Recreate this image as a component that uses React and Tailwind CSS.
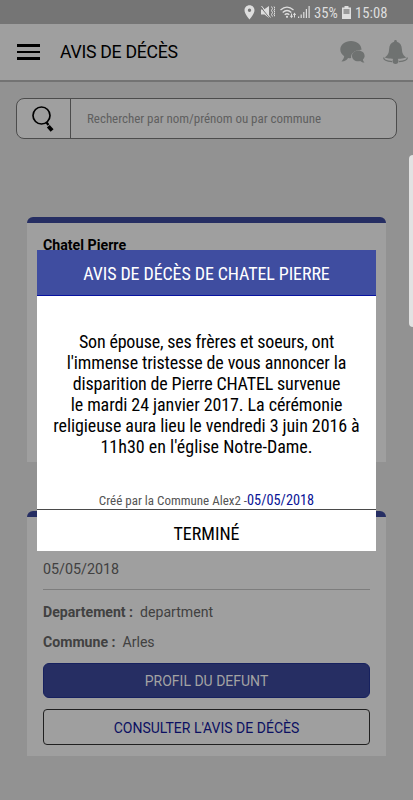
function StatusBar() {
  return (
    <div className="flex h-6 items-center bg-[#757575] pl-[244px] text-[#dedede]">
      <svg viewBox="0 0 11 15" className="h-[15px] w-[11px] shrink-0" fill="currentColor" fillRule="evenodd">
        <path d="M5.500 .3C2.600.3.500 2.500.500 5.200c0 3.500 5 9.300 5 9.300s5-5.800 5-9.300C10.500 2.500 8.400.3 5.500.3zM5.500 3.500a1.700 1.700 0 1 1 0 3.400 1.700 1.700 0 0 1 0-3.400z" />
      </svg>
      {/* Vibrate / muted */}
      <svg viewBox="0 0 14 14" className="ml-[6px] h-[14px] w-[14px] shrink-0" fill="currentColor">
        <path d="M0 4.500h3l5-3.500v12L3.500 9.500H0z" />
        <path d="M0 2.500l9 11" stroke="#757575" strokeWidth="1" />
        <path d="M.5 1l9 11.500M10.500 1.500l1 2-1 2 1 2-1 2 1 2M13 1.500l1 2-1 2 1 2-1 2 1 2" fill="none" stroke="currentColor" strokeWidth="1" />
      </svg>
      {/* Wifi with traffic arrows */}
      <svg viewBox="0 0 17 14" className="ml-[5px] h-[14px] w-[17px] shrink-0" fill="none" stroke="currentColor" strokeWidth="1.3">
        <path d="M.5 5Q7 -.8 13.500 5M2.700 7.400Q7 3.600 11.300 7.400M4.700 9.700Q7 7.700 9.300 9.700" />
        <circle cx="7" cy="11.800" r="1.100" fill="currentColor" stroke="none" />
        <path d="M11.500 8.500v3M14.500 12.500V9.500" strokeWidth="1" />
        <path d="M9.800 10.800h3.400l-1.700 2.400zM12.900 10h3.200l-1.600-2.400z" fill="currentColor" stroke="none" />
      </svg>
      <svg viewBox="0 0 12 12" className="ml-[1px] h-[12px] w-[12px] shrink-0" fill="currentColor">
        <path d="M0 10.500h1.200V12H0zM2.600 8.500h1.200V12H2.600zM5.200 6h1.200v6H5.200zM7.800 3h1.200v9H7.800zM10.500 0h1.200v12h-1.200z" />
      </svg>
      <span className="ml-[4px] w-[26px] whitespace-nowrap pt-[2px] text-[14.7px]">35%</span>
      <svg viewBox="0 0 9 13" className="ml-[2px] h-[13px] w-[9px] shrink-0">
        <path d="M0 1.500h2.500V0h4v1.500H9V13H0z" fill="#dedede" />
        <path d="M1.500 3h6v5h-6z" fill="#999" />
      </svg>
      <span className="ml-[4px] whitespace-nowrap pt-[2px] text-[14.7px]">15:08</span>
    </div>
  );
}

function Header() {
  return (
    <header className="flex h-[58px] items-center border-b-2 border-[#737373] bg-[#9f9f9f] pl-[17px] pr-[5px] text-black">
      <div className="flex w-[23px] flex-col gap-[4px]">
        <span className="h-[2.5px] bg-black" />
        <span className="h-[2.5px] bg-black" />
        <span className="h-[2.5px] bg-black" />
      </div>
      <h1 className="ml-5 whitespace-nowrap pt-px text-[17.7px] font-[450] tracking-[-0.3px] font-stretch-normal">
        AVIS DE DÉCÈS
      </h1>
      {/* Messages */}
      <svg viewBox="0 0 25 22" className="ml-auto h-[22px] w-[25px]" fill="#6f7271">
        <path d="M11 0C4.900 0 .3 3.800.3 8.500c0 2.700 1.500 5.100 3.900 6.700-.2 1.700-1 3.200-2.700 5.300 3 .1 5.200-1.600 6.600-3.600 1 .2 2 .3 3 .2-.4-4.900 3-8.100 10.400-8.400C21.500 3.800 17 0 11 0z" />
        <path d="M18.300 9.600c-3.600 0-6.300 2.400-6.300 5.400s2.700 5.300 6.300 5.300c.7 0 1.300-.1 1.900-.3 1.100 1 2.500 1.700 4.300 1.500-1-.8-1.500-1.900-1.600-3 1.100-1 1.700-2.200 1.700-3.500 0-3-2.700-5.400-6.300-5.400z" />
      </svg>
      {/* Notifications */}
      <svg viewBox="0 0 25 24" className="ml-[18px] h-[24px] w-[25px]" fill="#6f7271">
        <path d="M12.500 0c-1 0-1.400.7-1.400 1.700-3.200.8-4.800 3.600-5 7.500-.2 4.500-1.700 6.300-4.300 8.300 3 1.900 18.400 1.900 21.400 0-2.600-2-4.100-3.800-4.300-8.300-.2-3.900-1.800-6.700-5-7.500 0-1-.4-1.700-1.400-1.700z" />
        <path d="M.8 17.500c-.4 2.200 2.500 3.700 8.400 4.200M24.200 17.500c.4 2.200-2.500 3.700-8.400 4.200" fill="none" stroke="#6f7271" strokeWidth="1.300" />
        <circle cx="12.500" cy="21" r="2.900" />
      </svg>
    </header>
  );
}

function SearchBar() {
  return (
    <div className="mx-4 mt-4 flex h-[41px] rounded-lg border border-[#4c4c4c] bg-[#9f9f9f]">
      <div className="flex w-[54px] items-center justify-center border-r border-[#4c4c4c] pr-[2px]">
        <svg viewBox="0 0 24 26" className="h-[26px] w-[24px]" fill="none" stroke="#000">
          <circle cx="10.500" cy="9.500" r="8.500" strokeWidth="1.700" />
          <path d="M15.500 16.500l2 2.500" strokeWidth="2.200" />
          <path d="M17.300 20.200l3.800 4.400" strokeWidth="3.800" />
        </svg>
      </div>
      <span className="self-center pl-4 pt-px text-[13px] tracking-[-0.04px] text-[#5f5f5f]">
        Rechercher par nom/prénom ou par commune
      </span>
    </div>
  );
}

function NoticeCard({ name, date, departement, commune }) {
  return (
    <article className="h-[245px] rounded-t-md border-t-[6px] border-[#262e63] bg-[#9f9f9f] px-4 text-[14px] text-[#414141] font-stretch-normal">
      {name && <h2 className="mt-[12px] text-[14.2px] font-bold leading-5 text-black">{name}</h2>}
      {date && (
        <>
          <p className="pt-[42px] text-[14.3px] leading-5">{date}</p>
          <div className="mt-[10px] h-px bg-[#7d7d7d]" />
          <p className="mt-3 text-[14.1px] leading-5"><b>Departement :</b>&nbsp; {departement}</p>
          <p className="mt-[10px] text-[14.1px] leading-5"><b>Commune :</b>&nbsp; {commune}</p>
          <button className="mt-[11px] block h-[35px] w-full rounded-md border border-[#17215f] bg-[#262e63] pt-px text-[14px] text-[#a3a3a3]">
            PROFIL DU DEFUNT
          </button>
          <button className="mt-[11px] block h-[36px] w-full rounded-[4px] border border-[#202020] pt-[2px] text-[14px] text-[#0b1062]">
            CONSULTER L'AVIS DE DÉCÈS
          </button>
        </>
      )}
    </article>
  );
}

function NoticeModal() {
  return (
    <div className="absolute left-[37px] top-[250px] flex h-[301px] w-[339px] flex-col bg-white text-center text-black">
      <h2 className="flex h-[46px] items-center justify-center border-b border-[#0712a0] bg-[#3f4da0] pt-[2px] text-[18px] tracking-[-0.1px] text-white">
        AVIS DE DÉCÈS DE CHATEL PIERRE
      </h2>
      <div className="whitespace-nowrap pt-[35px] text-[18px] leading-[21px]">
        <p className="tracking-[-0.18px]">Son épouse, ses frères et soeurs, ont</p>
        <p className="tracking-[-0.13px]">l'immense tristesse de vous annoncer la</p>
        <p className="tracking-[-0.16px]">disparition de Pierre CHATEL survenue</p>
        <p className="tracking-[-0.08px]">le mardi 24 janvier 2017. La cérémonie</p>
        <p className="tracking-[-0.08px]">religieuse aura lieu le vendredi 3 juin 2016 à</p>
        <p>11h30 en l'église Notre-Dame.</p>
      </div>
      <p className="mt-auto flex h-[20px] items-center justify-center pt-[3px] text-[13px] text-[#555]">
        Créé par la Commune Alex2 -<span className="text-[14.3px] text-[#0a1496]">05/05/2018</span>
      </p>
      <button className="h-[42px] border-t border-[#4a4a4a] pt-[5px] text-[18px]">TERMINÉ</button>
    </div>
  );
}

export default function App() {
  return (
    <div className="relative h-[800px] w-[413px] overflow-hidden bg-[#929292] font-['Roboto',sans-serif] font-stretch-condensed">
      <StatusBar />
      <Header />
      <SearchBar />
      <main className="mt-[78px] flex flex-col gap-[49px] px-[27px]">
        <NoticeCard name="Chatel Pierre" />
        <NoticeCard date="05/05/2018" departement="department" commune="Arles" />
      </main>
      <NoticeModal />
      {/* Edge panel handle */}
      <div className="absolute left-[409px] top-[155px] h-[172px] w-2 rounded-[4px] bg-[#e2e2e2]" />
    </div>
  );
}
